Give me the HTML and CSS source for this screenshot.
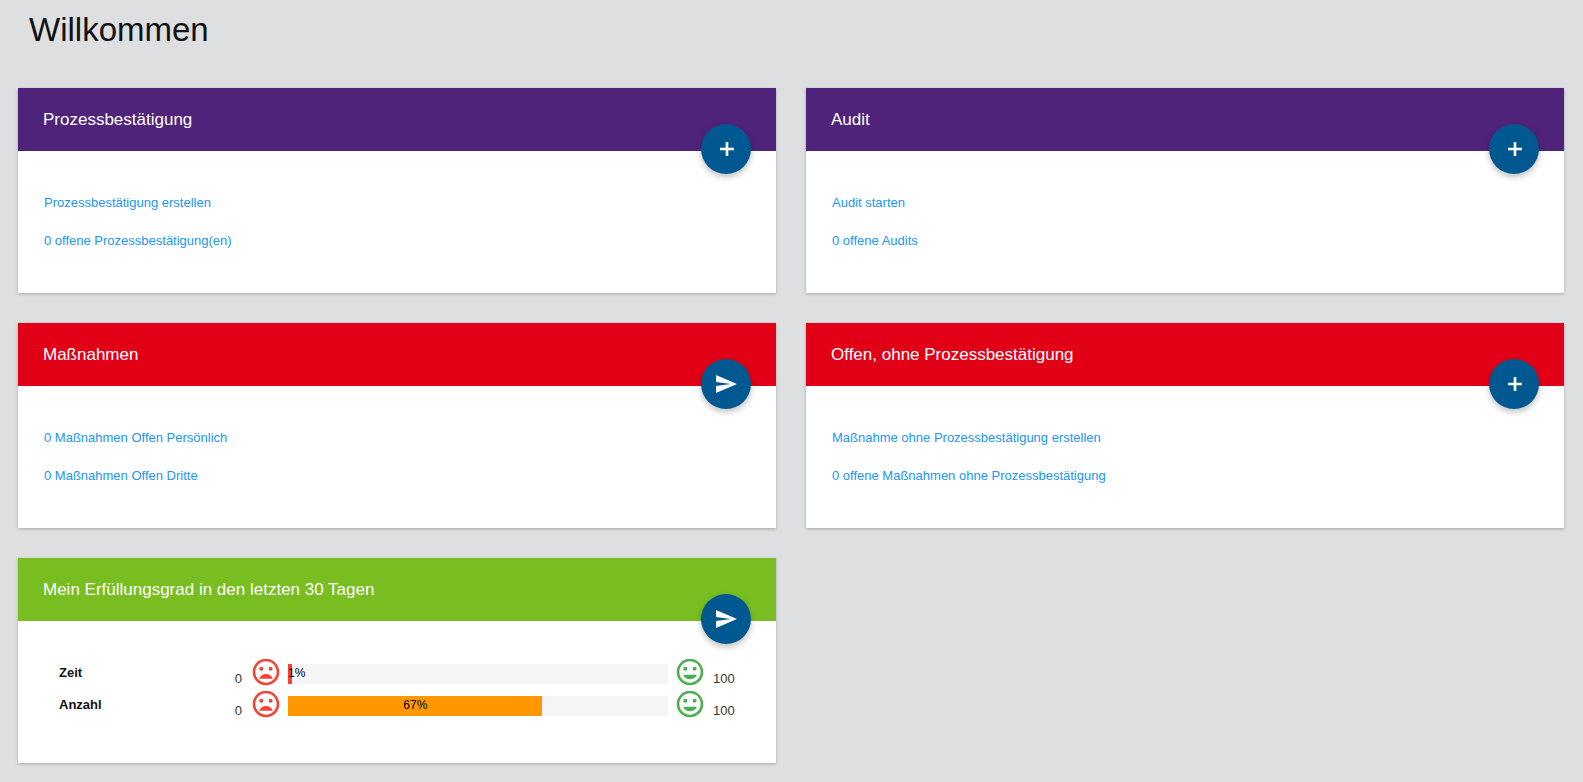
FILE: index.html
```html
<!DOCTYPE html>
<html lang="de">
<head>
<meta charset="utf-8">
<title>Willkommen</title>
<link rel="stylesheet" href="styles.css">
</head>
<body>
<svg class="defs" width="0" height="0" aria-hidden="true">
  <symbol id="i-add" viewBox="0 0 24 24"><path d="M20 13.3h-5.7V19h-2.6v-5.7H6v-2.6h5.7V5h2.6v5.7H20z"/></symbol>
  <symbol id="i-send" viewBox="0 0 24 24"><path d="M2.01 21L23 12 2.01 3 2 10l15 2-15 2z"/></symbol>
  <symbol id="i-bad" viewBox="0 0 24 24"><path d="M12 2C6.47 2 2 6.47 2 12s4.47 10 9.99 10S22 17.53 22 12 17.52 2 11.99 2zM12 20c-4.42 0-8-3.58-8-8s3.58-8 8-8 8 3.58 8 8-3.58 8-8 8zm3.5-9c.83 0 1.5-.67 1.5-1.5S16.33 8 15.5 8 14 8.67 14 9.5s.67 1.5 1.5 1.5zm-7 0c.83 0 1.5-.67 1.5-1.5S9.33 8 8.5 8 7 8.67 7 9.5 7.67 11 8.5 11zm3.5 2.5c-2.33 0-4.31 1.46-5.11 3.5h10.22c-.8-2.04-2.78-3.5-5.11-3.5z"/></symbol>
  <symbol id="i-good" viewBox="0 0 24 24"><path d="M12 2C6.47 2 2 6.47 2 12s4.47 10 9.99 10S22 17.53 22 12 17.52 2 11.99 2zM12 20c-4.42 0-8-3.58-8-8s3.58-8 8-8 8 3.58 8 8-3.58 8-8 8zm3.5-9c.83 0 1.5-.67 1.5-1.5S16.33 8 15.5 8 14 8.67 14 9.5s.67 1.5 1.5 1.5zm-7 0c.83 0 1.5-.67 1.5-1.5S9.33 8 8.5 8 7 8.67 7 9.5 7.67 11 8.5 11zm3.5 6.5c2.33 0 4.31-1.46 5.11-3.5H6.89c.8 2.04 2.78 3.5 5.11 3.5z"/></symbol>
</svg>
<h1 class="title">Willkommen</h1>
<main class="grid">
  <section class="card">
    <header class="card-head purple"><h2>Prozessbestätigung</h2>
      <button class="fab"><svg class="fab-icon"><use href="#i-add"/></svg></button></header>
    <div class="card-body links">
      <a href="#">Prozessbestätigung erstellen</a>
      <a href="#">0 offene Prozessbestätigung(en)</a>
    </div>
  </section>
  <section class="card">
    <header class="card-head purple"><h2>Audit</h2>
      <button class="fab"><svg class="fab-icon"><use href="#i-add"/></svg></button></header>
    <div class="card-body links">
      <a href="#">Audit starten</a>
      <a href="#">0 offene Audits</a>
    </div>
  </section>
  <section class="card">
    <header class="card-head red"><h2>Maßnahmen</h2>
      <button class="fab"><svg class="fab-icon"><use href="#i-send"/></svg></button></header>
    <div class="card-body links">
      <a href="#">0 Maßnahmen Offen Persönlich</a>
      <a href="#">0 Maßnahmen Offen Dritte</a>
    </div>
  </section>
  <section class="card">
    <header class="card-head red"><h2>Offen, ohne Prozessbestätigung</h2>
      <button class="fab"><svg class="fab-icon"><use href="#i-add"/></svg></button></header>
    <div class="card-body links">
      <a href="#">Maßnahme ohne Prozessbestätigung erstellen</a>
      <a href="#">0 offene Maßnahmen ohne Prozessbestätigung</a>
    </div>
  </section>
  <section class="card">
    <header class="card-head green"><h2>Mein Erfüllungsgrad in den letzten 30 Tagen</h2>
      <button class="fab"><svg class="fab-icon"><use href="#i-send"/></svg></button></header>
    <div class="card-body stats">
      <div class="stat">
        <span class="stat-label">Zeit</span>
        <span class="stat-min">0</span>
        <svg class="mood bad"><use href="#i-bad"/></svg>
        <div class="bar"><div class="bar-fill fill-red" style="width:1%"></div><span class="bar-text left">1%</span></div>
        <svg class="mood good"><use href="#i-good"/></svg>
        <span class="stat-max">100</span>
      </div>
      <div class="stat">
        <span class="stat-label">Anzahl</span>
        <span class="stat-min">0</span>
        <svg class="mood bad"><use href="#i-bad"/></svg>
        <div class="bar"><div class="bar-fill fill-orange" style="width:66.8%"></div><span class="bar-text mid">67%</span></div>
        <svg class="mood good"><use href="#i-good"/></svg>
        <span class="stat-max">100</span>
      </div>
    </div>
  </section>
</main>
</body>
</html>
```
FILE: styles.css
```css
* { box-sizing: border-box; }
html, body { margin: 0; height: 100%; }
body {
  background: #dedfe1;
  font-family: "Liberation Sans", Arial, sans-serif;
  color: #111;
  overflow: hidden;
}
.defs { position: absolute; }
.title {
  margin: 0;
  padding: 11px 0 0 29px;
  height: 88px;
  font-size: 33px;
  line-height: 38px;
  font-weight: 400;
}
.grid {
  display: grid;
  grid-template-columns: 758px 758px;
  grid-auto-rows: 205px;
  gap: 30px;
  padding-left: 18px;
}
.card {
  background: #fff;
  box-shadow: 0 1px 3px rgba(0,0,0,.25);
}
.card-head {
  position: relative;
  height: 63px;
  padding: 22px 25px 0;
  color: #fff;
}
.card-head h2 {
  margin: 0;
  font-size: 17px;
  line-height: 20px;
  font-weight: 400;
}
.purple { background: #50237a; }
.red { background: #e20016; }
.green { background: #78be20; }
.fab {
  position: absolute;
  right: 25px;
  top: 36px;
  width: 50px;
  height: 50px;
  border: 0;
  border-radius: 50%;
  padding: 0;
  background: #005891;
  box-shadow: 0 3px 6px rgba(0,0,0,.25);
  display: flex;
  align-items: center;
  justify-content: center;
}
.fab-icon { width: 24px; height: 24px; fill: #fff; }
.card-body.links {
  display: flex;
  flex-direction: column;
  gap: 23px;
  padding: 44px 26px 0;
}
.links a {
  color: #2196f3;
  font-size: 13px;
  line-height: 15px;
  text-decoration: none;
}
.card-body.stats {
  display: flex;
  flex-direction: column;
  padding: 35px 0 0;
}
.stat {
  display: flex;
  align-items: flex-start;
  height: 32px;
  padding-left: 41px;
}
.stat-label {
  width: 166px;
  font-size: 13px;
  font-weight: 700;
  line-height: 15px;
  padding-top: 9px;
}
.stat-min, .stat-max {
  font-size: 13px;
  line-height: 15px;
  padding-top: 15px;
  color: #333;
}
.stat-min { width: 17px; text-align: right; margin-right: 1px; }
.stat-max { margin-left: 7px; }
.mood { width: 32px; height: 32px; }
.stat-min + .mood { margin-left: 7px; }
.bad { fill: #f44336; }
.good { fill: #4caf50; }
.bar {
  position: relative;
  width: 380px;
  height: 20px;
  margin: 8px 6px 0;
  background: #f5f5f5;
}
.bar-fill { height: 100%; }
.fill-red { background: #f44336; }
.fill-orange { background: #ff9800; }
.bar-text {
  position: absolute;
  top: 0;
  font-size: 12px;
  line-height: 18px;
  color: #000;
}
.bar-text.left { left: 0; }
.bar-text.mid { left: 0; width: 67%; text-align: center; }
```
